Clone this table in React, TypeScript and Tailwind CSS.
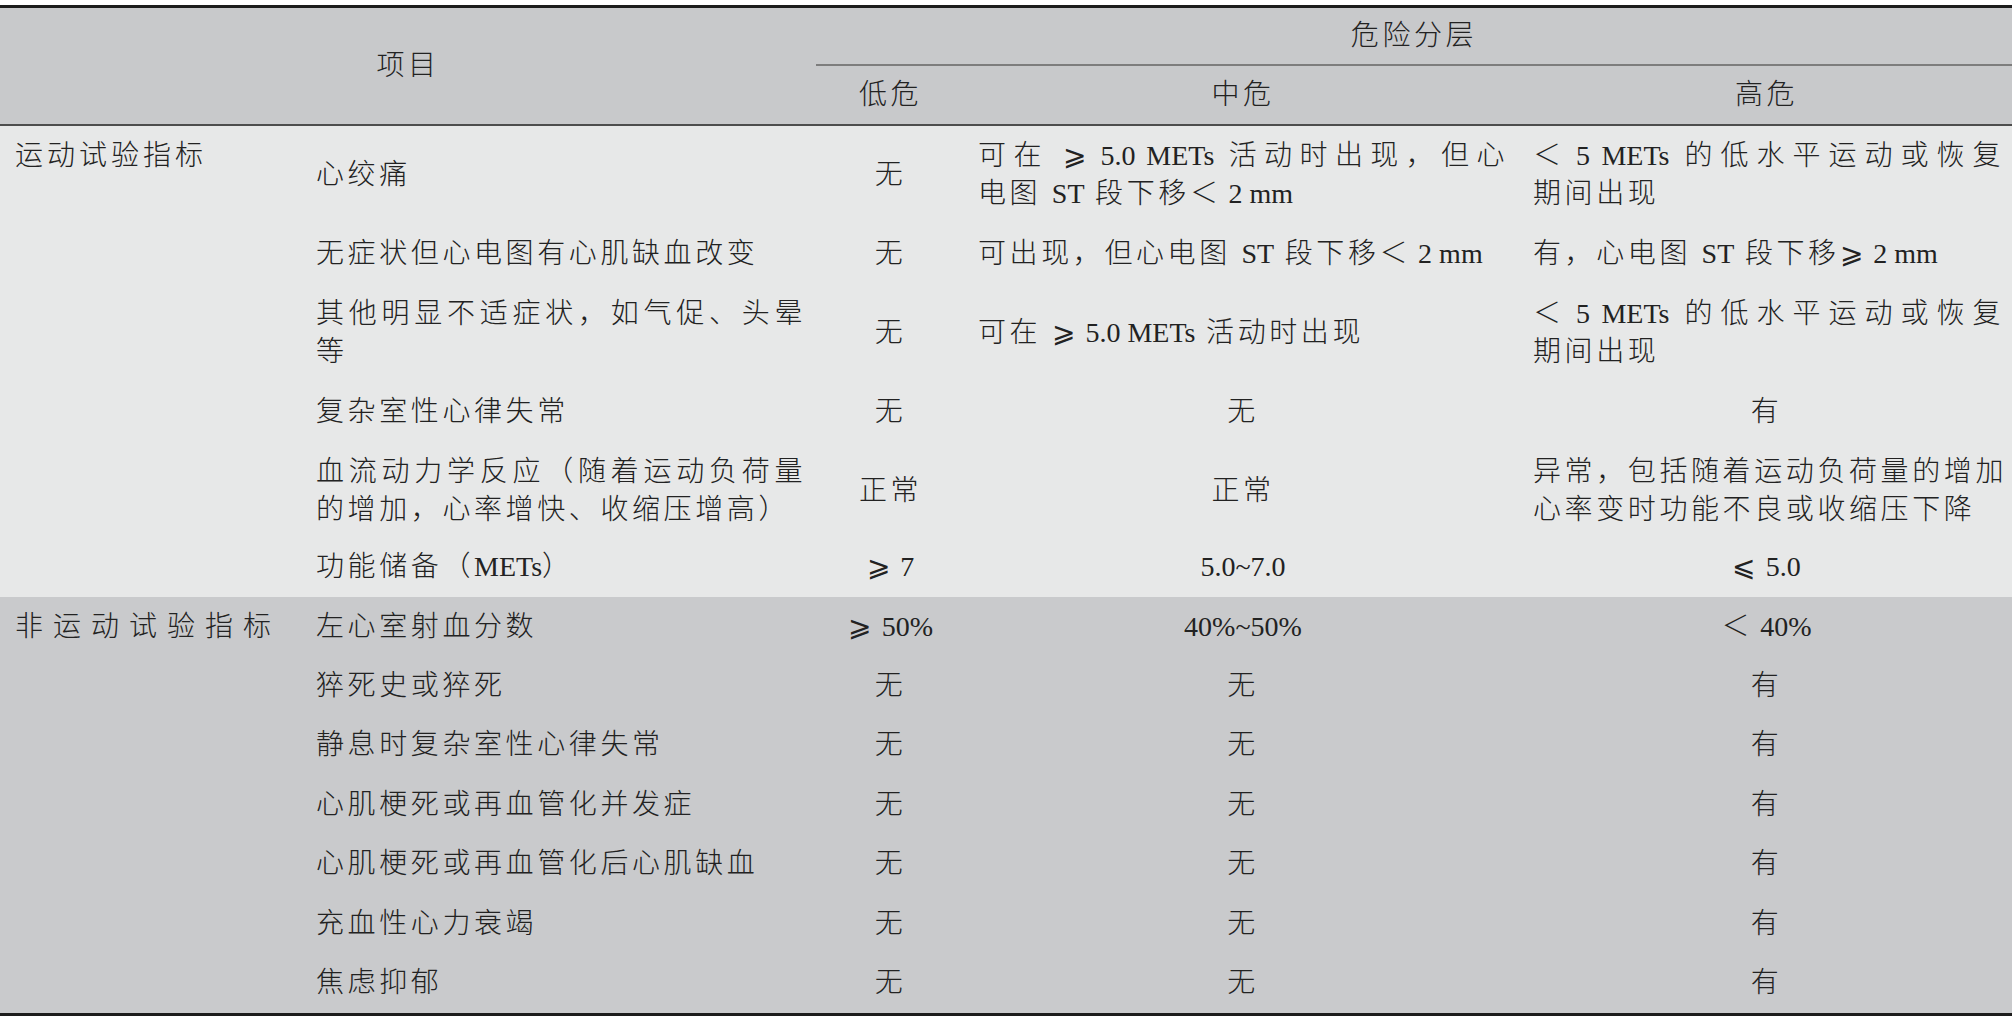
import { ReactNode } from "react";

type Cell = ReactNode | string[];

type RowProps = {
  item: Cell;
  low: ReactNode;
  mid: Cell;
  high: Cell;
  midLeft?: boolean;
  highLeft?: boolean;
  h: string;
};

function L({ children }: { children: ReactNode }) {
  return <span className="tracking-normal">{children}</span>;
}

function Lines({ lines }: { lines: ReactNode[] }) {
  return (
    <div>
      {lines.map((line, i) => (
        <div
          key={i}
          className={i < lines.length - 1 ? "whitespace-nowrap [text-align-last:justify]" : "whitespace-nowrap"}
        >
          {line}
        </div>
      ))}
    </div>
  );
}

function Content({ cell }: { cell: Cell }) {
  if (Array.isArray(cell)) return <Lines lines={cell} />;
  return <div className="whitespace-nowrap">{cell}</div>;
}

function Row({ item, low, mid, high, midLeft, highLeft, h }: RowProps) {
  return (
    <div className={`flex items-center ${h}`}>
      <div className="w-[512px] shrink-0 pl-[12px] pr-[10px]">
        <Content cell={item} />
      </div>
      <div className="w-[149px] shrink-0 text-center whitespace-nowrap">{low}</div>
      <div className={`w-[556px] shrink-0 pl-[13px] pr-[13px] ${midLeft ? "text-left" : "text-center"}`}>
        <Content cell={mid} />
      </div>
      <div className={`flex-1 min-w-0 ${highLeft ? "pl-[12px] pr-[8px] text-left" : "text-center"}`}>
        <Content cell={high} />
      </div>
    </div>
  );
}

export default function App() {
  return (
    <div className="w-[2012px] h-[1021px] bg-white pt-[5px] font-['Liberation_Serif','Noto_Sans_CJK_SC',serif] font-light text-[28px] leading-[38px] tracking-[3.6px] text-[#222222]">
      <div className="border-t-[3px] border-b-[3px] border-[#1c1c1c]">
        {/* header */}
        <div className="flex h-[118px] bg-[#c8c9cb] border-b-2 border-[#4d4d4d]">
          <div className="w-[816px] shrink-0 flex items-center justify-center">项目</div>
          <div className="flex-1 min-w-0 flex flex-col">
            <div className="h-[58px] flex items-center justify-center border-b-2 border-[#7d7d7d]">危险分层</div>
            <div className="flex-1 flex items-center">
              <div className="w-[149px] shrink-0 text-center">低危</div>
              <div className="w-[556px] shrink-0 text-center">中危</div>
              <div className="flex-1 min-w-0 text-center">高危</div>
            </div>
          </div>
        </div>

        {/* exercise test */}
        <div className="flex h-[471px] bg-[#e7e8e8]">
          <div className="w-[304px] shrink-0 pl-[15px] pt-[11px] whitespace-nowrap tracking-[4px]">运动试验指标</div>
          <div className="flex-1 min-w-0 flex flex-col pt-[9px]">
            <Row
              h="h-[79px]"
              item="心绞痛"
              low="无"
              midLeft
              mid={[
                <>可在 ⩾<L> 5.0 METs</L> 活动时出现，但心</>,
                <>电图 <L>ST</L> 段下移＜<L> 2 mm</L></>,
              ]}
              highLeft
              high={[<>＜<L> 5 METs</L> 的低水平运动或恢复</>, "期间出现"]}
            />
            <Row
              h="h-[79px]"
              item="无症状但心电图有心肌缺血改变"
              low="无"
              midLeft
              mid={<>可出现，但心电图 <L>ST</L> 段下移＜<L> 2 mm</L></>}
              highLeft
              high={<>有，心电图 <L>ST</L> 段下移⩾<L> 2 mm</L></>}
            />
            <Row
              h="h-[79px]"
              item={["其他明显不适症状，如气促、头晕", "等"]}
              low="无"
              midLeft
              mid={<>可在 ⩾<L> 5.0 METs</L> 活动时出现</>}
              highLeft
              high={[<>＜<L> 5 METs</L> 的低水平运动或恢复</>, "期间出现"]}
            />
            <Row h="h-[79px]" item="复杂室性心律失常" low="无" mid="无" high="有" />
            <Row
              h="h-[79px]"
              item={["血流动力学反应（随着运动负荷量", "的增加，心率增快、收缩压增高）"]}
              low="正常"
              mid="正常"
              highLeft
              high={["异常，包括随着运动负荷量的增加", "心率变时功能不良或收缩压下降"]}
            />
            <div className="flex items-start pt-[18px] h-[67px]">
              <div className="w-[512px] shrink-0 pl-[12px] whitespace-nowrap">
                功能储备（<L>METs</L>）
              </div>
              <div className="w-[149px] shrink-0 text-center whitespace-nowrap">
                ⩾<L> 7</L>
              </div>
              <div className="w-[556px] shrink-0 text-center">
                <L>5.0~7.0</L>
              </div>
              <div className="flex-1 min-w-0 text-center">
                ⩽<L> 5.0</L>
              </div>
            </div>
          </div>
        </div>

        {/* non-exercise */}
        <div className="flex h-[416px] bg-[#c9cacc]">
          <div className="w-[304px] shrink-0 pl-[15px] h-[59.4px] flex items-center whitespace-nowrap tracking-[10px]">
            非运动试验指标
          </div>
          <div className="flex-1 min-w-0 flex flex-col">
            <Row
              h="h-[59.4px]"
              item="左心室射血分数"
              low={<>⩾<L> 50%</L></>}
              mid={<L>40%~50%</L>}
              high={<>＜<L> 40%</L></>}
            />
            <Row h="h-[59.4px]" item="猝死史或猝死" low="无" mid="无" high="有" />
            <Row h="h-[59.4px]" item="静息时复杂室性心律失常" low="无" mid="无" high="有" />
            <Row h="h-[59.4px]" item="心肌梗死或再血管化并发症" low="无" mid="无" high="有" />
            <Row h="h-[59.4px]" item="心肌梗死或再血管化后心肌缺血" low="无" mid="无" high="有" />
            <Row h="h-[59.4px]" item="充血性心力衰竭" low="无" mid="无" high="有" />
            <Row h="h-[59.4px]" item="焦虑抑郁" low="无" mid="无" high="有" />
          </div>
        </div>
      </div>
    </div>
  );
}
